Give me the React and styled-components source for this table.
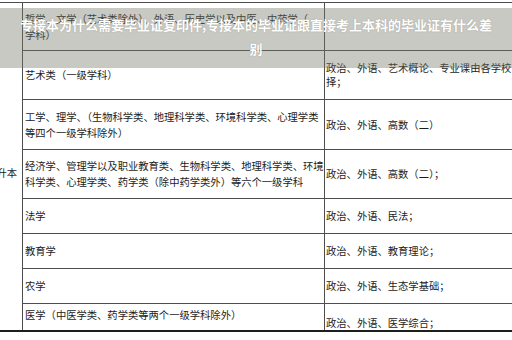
import React from "react";
import styled, { createGlobalStyle } from "styled-components";

const Global = createGlobalStyle`
  html, body { margin: 0; padding: 0; background: #ffffff; }
  body { width: 512px; height: 340px; overflow: hidden; }
  #root { width: 512px; height: 340px; }
`;

const Page = styled.div`
  position: relative;
  width: 512px;
  height: 340px;
  background: #fff;
  font-family: "Noto Sans CJK SC", "Noto Sans", sans-serif;
  color: #1c1c1c;
`;

const Frame = styled.div`
  height: 332px;
  box-sizing: border-box;
  padding-top: 2px;
  overflow: hidden;
  border-bottom: 2px solid #1e1e1e;
`;

const Table = styled.div`
  display: grid;
  width: 540px;
  grid-template-columns: 23px 302px 215px;
  grid-template-rows: 48px 49px 50px 49px 35px 35px 35px 38px;
  border-top: 1px solid #4e4e4e;
`;

const SideCell = styled.div`
  grid-column: 1;
  grid-row: 1 / -1;
  display: flex;
  align-items: center;
  justify-content: flex-end;
  padding-right: 5px;
  overflow: hidden;
  white-space: nowrap;
  border-right: 1px solid #4e4e4e;
  font-size: 10.3px;
`;

const Cell = styled.div`
  display: flex;
  flex-direction: column;
  justify-content: center;
  overflow: hidden;
  white-space: nowrap;
  font-size: 10.3px;
  line-height: ${(p) => (p.$right ? "14px" : "16px")};
  padding-left: ${(p) => (p.$right ? "1px" : "2px")};
  border-bottom: 1px solid #4e4e4e;
  border-right: ${(p) => (p.$right ? "none" : "1px solid #4e4e4e")};
`;

const Line = styled.span`
  display: block;
`;

const TitleOverlay = styled.div`
  position: absolute;
  top: 8px;
  left: 0;
  right: 0;
  height: 60px;
  box-sizing: border-box;
  padding: 5px 16px 0;
  background: rgba(118, 120, 102, 0.4);
  color: #ffffff;
  font-family: "Noto Sans CJK SC", "Noto Sans", sans-serif;
  font-weight: 700;
  font-size: 13px;
  line-height: 24px;
  text-align: center;
  text-shadow: 0 0 1px rgba(90, 90, 80, 0.5);
`;

const rows = [
  {
    left: ["哲学、文学（艺术类除外）、外语、历史学以及中医、中药学（", "学科）"],
    right: [],
  },
  {
    left: ["艺术类（一级学科）"],
    right: ["政治、外语、艺术概论、专业课由各学校自", "择；"],
  },
  {
    left: ["工学、理学、（生物科学类、地理科学类、环境科学类、心理学类", "等四个一级学科除外）"],
    right: ["政治、外语、高数（二）"],
  },
  {
    left: ["经济学、管理学以及职业教育类、生物科学类、地理科学类、环境", "科学类、心理学类、药学类（除中药学类外）等六个一级学科"],
    right: ["政治、外语、高数（二）；"],
  },
  { left: ["法学"], right: ["政治、外语、民法；"] },
  { left: ["教育学"], right: ["政治、外语、教育理论；"] },
  { left: ["农学"], right: ["政治、外语、生态学基础；"] },
  { left: ["医学（中医学类、药学类等两个一级学科除外）", ""], right: ["政治、外语、医学综合；"] },
];

export default function App() {
  return (
    <Page>
      <Global />
      <Frame>
        <Table>
          <SideCell>专升本</SideCell>
          {rows.map((r, i) => (
            <React.Fragment key={i}>
              <Cell>
                {r.left.map((t, j) => (
                  <Line key={j}>{t || "\u00a0"}</Line>
                ))}
              </Cell>
              <Cell $right>
                {r.right.map((t, j) => (
                  <Line key={j}>{t}</Line>
                ))}
              </Cell>
            </React.Fragment>
          ))}
        </Table>
      </Frame>
      <TitleOverlay>
        专接本为什么需要毕业证复印件,专接本的毕业证跟直接考上本科的毕业证有什么差别
      </TitleOverlay>
    </Page>
  );
}
